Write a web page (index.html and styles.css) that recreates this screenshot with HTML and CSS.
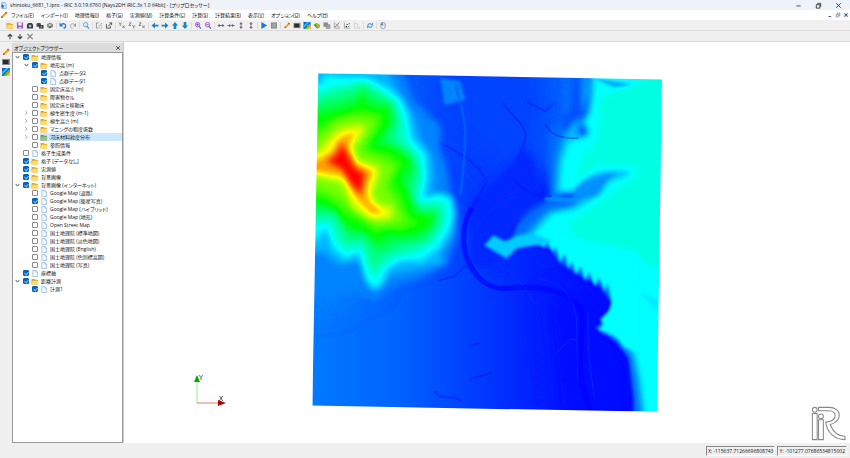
FILE: index.html
```
<!DOCTYPE html>
<html lang="ja">
<head>
  <meta charset="UTF-8">
  <meta name="viewport" content="width=device-width, initial-scale=1.0">
  <title>shintoku_6681_1.ipro - iRIC</title>
  <link rel="stylesheet" href="styles.css">
</head>
<body>
  <!-- Icon set -->
  <svg class="defs" width="0" height="0" aria-hidden="true">
    <symbol id="pencil" viewBox="0 0 16 16"><path d="M2 14l1-4 8-8 3 3-8 8z" fill="#f5a21b"/><path d="M2 14l1-4 3 3z" fill="#7a4a12"/><path d="M10 3l3 3 2-2-3-3z" fill="#d9472b"/></symbol>
    <symbol id="folder" viewBox="0 0 16 16"><path d="M0 2h7l2 2h6v11H0z" fill="#e3a920"/><path d="M2 6h13v8H1z" fill="#ffdc6e"/></symbol>
    <symbol id="folder-green" viewBox="0 0 16 16"><path d="M0 2h7l2 2h6v11H0z" fill="#6f9a5a"/><path d="M2 6h13v8H1z" fill="#9cc08a"/></symbol>
    <symbol id="page" viewBox="0 0 16 16"><path d="M3 1h7l4 4v10H3z" fill="#f4f9ff" stroke="#7fa9d8" stroke-width="1.5"/><path d="M10 1v4h4" fill="#b9d4f2" stroke="#7fa9d8"/></symbol>
    <symbol id="app" viewBox="0 0 16 16"><path d="M4 1h7l3 4v10H4z" fill="#d5e6f7" stroke="#6f9ccc" stroke-width="1.5"/><path d="M2 9l4-4 4 4-4 6z" fill="#2f7bd6"/></symbol>
    <symbol id="save" viewBox="0 0 16 16"><path d="M1 1h14v14H1z" fill="#9a5bb0"/><path d="M4 1h8v7H4z" fill="#f3e9f7"/><path d="M5 11h6v4H5z" fill="#e4d0ea"/></symbol>
    <symbol id="camera" viewBox="0 0 16 16"><path d="M1 6l3-4h8l3 4v9H1z" fill="#3b3f44"/><circle cx="8" cy="9" r="3" fill="#a8c4dc"/></symbol>
    <symbol id="cameras" viewBox="0 0 16 16"><path d="M0 4l2-2h6l2 2v7H0z" fill="#4b4f55"/><path d="M6 7h10v8H6z" fill="#2f3338"/><circle cx="11" cy="11" r="2" fill="#9dbbd6"/></symbol>
    <symbol id="globe" viewBox="0 0 16 16"><path d="M8 1l7 4v6l-7 4-7-4V5z" fill="#8b8b8b"/><circle cx="8" cy="7" r="3" fill="#c9c9c9"/><path d="M5 12l5-3 2 2-5 3z" fill="#555"/></symbol>
    <symbol id="undo" viewBox="0 0 16 16"><path d="M4 6c5-4 10-1 10 3 0 3-2 5-5 5" fill="none" stroke="#2f7bd6" stroke-width="3"/><path d="M0 1v9h9z" fill="#2f7bd6"/></symbol>
    <symbol id="redo" viewBox="0 0 16 16"><path d="M12 6C7 2 2 5 2 9c0 3 2 5 5 5" fill="none" stroke="#9a9a9a" stroke-width="2"/><path d="M15 2v8H8z" fill="#9a9a9a"/></symbol>
    <symbol id="zoom" viewBox="0 0 16 16"><circle cx="7" cy="6" r="5" fill="#dcebfa" stroke="#6f9cd6" stroke-width="2"/><path d="M10 10l5 5" stroke="#5b8fd0" stroke-width="3"/></symbol>
    <symbol id="zoom-in" viewBox="0 0 16 16"><circle cx="7" cy="6" r="5" fill="#efe6fb" stroke="#7a62c8" stroke-width="2"/><path d="M10 10l5 5" stroke="#4f79c9" stroke-width="3"/><path d="M4 6h6M7 3v6" stroke="#b03ba8" stroke-width="2"/></symbol>
    <symbol id="zoom-out" viewBox="0 0 16 16"><circle cx="7" cy="6" r="5" fill="#efe6fb" stroke="#7a62c8" stroke-width="2"/><path d="M10 10l5 5" stroke="#4f79c9" stroke-width="3"/><path d="M4 6h6" stroke="#b03ba8" stroke-width="2"/></symbol>
    <symbol id="region" viewBox="0 0 16 16"><path d="M7 2H2v12h4M12 6l2-2-2-2" fill="none" stroke="#666" stroke-width="1.500"/><path d="M8 8h6v6H8z" fill="none" stroke="#999" stroke-width="1.500" stroke-dasharray="2 1"/></symbol>
    <symbol id="expand" viewBox="0 0 16 16"><path d="M2 5v9h9V9M6 10l8-8M9 2h5v5" fill="none" stroke="#444" stroke-width="2"/></symbol>
    <symbol id="axis-yx" viewBox="0 0 16 16"><path d="M1 1l3 4 3-4M4 5v4M9 8l5 6M14 8l-5 6" fill="none" stroke="#555" stroke-width="1.500"/></symbol>
    <symbol id="axis-zy" viewBox="0 0 16 16"><path d="M1 2h5L1 8h5M9 7l3 4 3-4M12 11v4" fill="none" stroke="#555" stroke-width="1.500"/></symbol>
    <symbol id="axis-zx" viewBox="0 0 16 16"><path d="M1 2h5L1 8h5M9 8l5 6M14 8l-5 6" fill="none" stroke="#555" stroke-width="1.500"/></symbol>
    <symbol id="left" viewBox="0 0 16 16"><path d="M0 8l8-7v5h8v4H8v5z" fill="#1789c0"/></symbol>
    <symbol id="right" viewBox="0 0 16 16"><path d="M16 8L8 1v5H0v4h8v5z" fill="#1789c0"/></symbol>
    <symbol id="up" viewBox="0 0 16 16"><path d="M8 0l7 8h-4v8H5V8H1z" fill="#1789c0"/></symbol>
    <symbol id="down" viewBox="0 0 16 16"><path d="M8 16l7-8h-4V0H5v8H1z" fill="#1789c0"/></symbol>
    <symbol id="wide" viewBox="0 0 16 16"><path d="M0 8l5-4v3h6V4l5 4-5 4V9H5v3z" fill="#666"/></symbol>
    <symbol id="narrow" viewBox="0 0 16 16"><path d="M0 7h4V4l4 4-4 4V9H0zM16 7h-4V4L8 8l4 4V9h4z" fill="#666"/></symbol>
    <symbol id="tall" viewBox="0 0 16 16"><path d="M8 0l4 5H9v6h3l-4 5-4-5h3V5H4z" fill="#666"/></symbol>
    <symbol id="short" viewBox="0 0 16 16"><path d="M7 0v3H4l4 5 4-5H9V0zM7 16v-3H4l4-5 4 5H9v3z" fill="#666"/></symbol>
    <symbol id="play" viewBox="0 0 16 16"><path d="M2 0l13 8-13 8z" fill="#1f77d2"/></symbol>
    <symbol id="stop" viewBox="0 0 16 16"><path d="M1 1h14v14H1z" fill="#8f8f8f"/><path d="M4 4h8v8H4z" fill="#a3a3a3"/></symbol>
    <symbol id="console" viewBox="0 0 16 16"><path d="M0 2h16v12H0z" fill="#8a8a8a"/><path d="M2 4h11v8H2z" fill="#2a2a2a"/></symbol>
    <symbol id="rainbow" viewBox="0 0 16 16"><path d="M0 0h16v16H0z" fill="#1455e8"/><path d="M0 8l8-8h6L0 14z" fill="#19c8e8"/><path d="M2 16L16 2v6l-8 8z" fill="#4bd12a"/><path d="M8 16l8-8v8z" fill="#f8d21c"/><circle cx="11" cy="10" r="3" fill="#f08a1c"/></symbol>
    <symbol id="surface" viewBox="0 0 16 16"><path d="M0 7l6-5 9 5-7 6z" fill="#23b04a"/><path d="M4 4l5-2 3 3-4 2z" fill="#f5b81c"/><path d="M3 10l6 2 5-4v4l-5 3z" fill="#2a62cf"/><circle cx="10" cy="10" r="3" fill="#f2a31d"/></symbol>
    <symbol id="grid-view" viewBox="0 0 16 16"><path d="M0 1h10v10H0z" fill="#8c8c8c"/><path d="M6 6h9v9H6z" fill="#b5b5b5" stroke="#777"/><path d="M6 10h9M10 6v9" stroke="#777"/></symbol>
    <symbol id="graph" viewBox="0 0 16 16"><path d="M2 1v13h13" fill="none" stroke="#888" stroke-width="1.500"/><path d="M3 11l4-2 6-8" fill="none" stroke="#c03fb0" stroke-width="2"/><path d="M5 3l3 6 6 2" fill="none" stroke="#8b8b8b" stroke-width="1.500"/></symbol>
    <symbol id="scatter" viewBox="0 0 16 16"><path d="M2 1v13h13" fill="none" stroke="#888" stroke-width="1.500"/><path d="M5 9h3v3H5zM7 5h3v2H7zM12 3h2v2h-2zM11 9h2v2h-2z" fill="#222"/></symbol>
    <symbol id="graph-off" viewBox="0 0 16 16"><path d="M2 1v13h13" fill="none" stroke="#c4c4c4" stroke-width="1.500"/><path d="M4 4c5-2 7 2 4 5l6 4" fill="none" stroke="#bbb" stroke-width="1.500"/></symbol>
    <symbol id="sync" viewBox="0 0 16 16"><path d="M3 10c-1-5 4-8 8-5M13 6c1 5-4 8-8 5" fill="none" stroke="#5c9ad8" stroke-width="2.500"/><path d="M9 7h6V1zM7 9H1v6z" fill="#5c9ad8"/></symbol>
    <symbol id="mouse" viewBox="0 0 16 16"><rect x="3" y="1" width="10" height="14" rx="4" fill="#e9edf5" stroke="#7b8190" stroke-width="1.500"/><path d="M8 1v6H3V5q0-4 5-4z" fill="#5f8fd8"/><path d="M3 7h10" stroke="#7b8190"/></symbol>
    <symbol id="arrow-up" viewBox="0 0 16 16"><path d="M8 14V3M3 8l5-5 5 5" fill="none" stroke="#444" stroke-width="2.500"/></symbol>
    <symbol id="arrow-down" viewBox="0 0 16 16"><path d="M8 2v11M3 8l5 5 5-5" fill="none" stroke="#444" stroke-width="2.500"/></symbol>
    <symbol id="delete" viewBox="0 0 16 16"><path d="M2 2l12 12M14 2L2 14" stroke="#777" stroke-width="2.500"/></symbol>
    <symbol id="close" viewBox="0 0 16 16"><path d="M3 3l10 10M13 3L3 13" stroke="#333" stroke-width="2.200"/></symbol>
    <symbol id="minimize" viewBox="0 0 16 16"><path d="M3 9h10" stroke="#444" stroke-width="2"/></symbol>
    <symbol id="restore" viewBox="0 0 16 16"><path d="M3 6h8v8H3z" fill="none" stroke="#333" stroke-width="2"/><path d="M5 3h8v8" fill="none" stroke="#333" stroke-width="2"/></symbol>
    <symbol id="mdi-min" viewBox="0 0 16 16"><path d="M4 12h7" stroke="#4d6685" stroke-width="3"/></symbol>
    <symbol id="mdi-restore" viewBox="0 0 16 16"><path d="M3 7h7v6H3zM6 6V3h7v6h-3" fill="none" stroke="#6d829d" stroke-width="2"/></symbol>
    <symbol id="mdi-close" viewBox="0 0 16 16"><path d="M2 2h12v12H2z" fill="#c9d3df"/><path d="M4 4l8 8M12 4l-8 8" stroke="#4d6685" stroke-width="2.500"/></symbol>
    <symbol id="chevron-open" viewBox="0 0 16 16"><path d="M3 5l5 6 5-6" fill="none" stroke="#333" stroke-width="2.200"/></symbol>
    <symbol id="chevron" viewBox="0 0 16 16"><path d="M5 3l5 5-5 5" fill="none" stroke="#888" stroke-width="2"/></symbol>
  </svg>

  <header class="titlebar">
    <svg class="icon"><use href="#app"/></svg>
    <h1>shintoku_6681_1.ipro - iRIC 3.0.19.6760 [Nays2DH iRIC.3x 1.0 64bit] - [プリプロセッサー]</h1>
    <div class="window-buttons">
      <button aria-label="最小化"><svg class="icon"><use href="#minimize"/></svg></button>
      <button aria-label="元に戻す"><svg class="icon"><use href="#restore"/></svg></button>
      <button aria-label="閉じる"><svg class="icon"><use href="#close"/></svg></button>
    </div>
  </header>

  <nav class="menubar">
    <svg class="icon"><use href="#pencil"/></svg>
    <button>ファイル(<u>F</u>)</button>
    <button>インポート(<u>I</u>)</button>
    <button>地理情報(<u>I</u>)</button>
    <button>格子(<u>G</u>)</button>
    <button>実測値(<u>M</u>)</button>
    <button>計算条件(<u>C</u>)</button>
    <button>計算(<u>S</u>)</button>
    <button>計算結果(<u>R</u>)</button>
    <button>表示(<u>V</u>)</button>
    <button>オプション(<u>O</u>)</button>
    <button>ヘルプ(<u>H</u>)</button>
    <div class="mdi-buttons">
      <button aria-label="最小化"><svg class="icon"><use href="#mdi-min"/></svg></button>
      <button aria-label="元に戻す"><svg class="icon"><use href="#mdi-restore"/></svg></button>
      <button aria-label="閉じる"><svg class="icon"><use href="#mdi-close"/></svg></button>
    </div>
  </nav>

  <div class="toolbar">
    <div class="tools">
      <button aria-label="開く"><svg class="icon"><use href="#folder"/></svg></button>
      <button aria-label="保存"><svg class="icon"><use href="#save"/></svg></button>
      <button aria-label="スナップショット"><svg class="icon"><use href="#camera"/></svg></button>
      <button aria-label="連続スナップショット"><svg class="icon"><use href="#cameras"/></svg></button>
      <button aria-label="Google Earth"><svg class="icon"><use href="#globe"/></svg></button>
    </div>
    <div class="tools">
      <button aria-label="元に戻す"><svg class="icon"><use href="#undo"/></svg></button>
      <button aria-label="やり直し"><svg class="icon"><use href="#redo"/></svg></button>
    </div>
    <div class="tools">
      <button aria-label="拡大鏡"><svg class="icon"><use href="#zoom"/></svg></button>
    </div>
    <div class="tools">
      <button aria-label="領域"><svg class="icon"><use href="#region"/></svg></button>
      <button aria-label="全体表示"><svg class="icon"><use href="#expand"/></svg></button>
    </div>
    <div class="tools">
      <button aria-label="XY平面"><svg class="icon"><use href="#axis-yx"/></svg></button>
      <button aria-label="YZ平面"><svg class="icon"><use href="#axis-zy"/></svg></button>
      <button aria-label="XZ平面"><svg class="icon"><use href="#axis-zx"/></svg></button>
    </div>
    <div class="tools">
      <button aria-label="左へ"><svg class="icon"><use href="#left"/></svg></button>
      <button aria-label="右へ"><svg class="icon"><use href="#right"/></svg></button>
      <button aria-label="上へ"><svg class="icon"><use href="#up"/></svg></button>
      <button aria-label="下へ"><svg class="icon"><use href="#down"/></svg></button>
    </div>
    <div class="tools">
      <button aria-label="拡大"><svg class="icon"><use href="#zoom-in"/></svg></button>
      <button aria-label="縮小"><svg class="icon"><use href="#zoom-out"/></svg></button>
    </div>
    <div class="tools">
      <button aria-label="X方向に拡大"><svg class="icon"><use href="#wide"/></svg></button>
      <button aria-label="X方向に縮小"><svg class="icon"><use href="#narrow"/></svg></button>
      <button aria-label="Y方向に拡大"><svg class="icon"><use href="#tall"/></svg></button>
      <button aria-label="Y方向に縮小"><svg class="icon"><use href="#short"/></svg></button>
    </div>
    <div class="tools">
      <button aria-label="計算開始"><svg class="icon"><use href="#play"/></svg></button>
      <button aria-label="計算停止"><svg class="icon"><use href="#stop"/></svg></button>
    </div>
    <div class="tools">
      <button aria-label="プリプロセッサー"><svg class="icon"><use href="#pencil"/></svg></button>
      <button aria-label="コンソール"><svg class="icon"><use href="#console"/></svg></button>
      <button aria-label="2次元可視化"><svg class="icon"><use href="#rainbow"/></svg></button>
      <button aria-label="鳥瞰図"><svg class="icon"><use href="#surface"/></svg></button>
      <button aria-label="3次元可視化"><svg class="icon"><use href="#grid-view"/></svg></button>
      <button aria-label="グラフ"><svg class="icon"><use href="#graph"/></svg></button>
      <button aria-label="散布図"><svg class="icon"><use href="#scatter"/></svg></button>
      <button aria-label="検証" disabled><svg class="icon"><use href="#graph-off"/></svg></button>
    </div>
    <div class="tools">
      <button aria-label="更新"><svg class="icon"><use href="#sync"/></svg></button>
    </div>
    <div class="tools">
      <button aria-label="マウス"><svg class="icon"><use href="#mouse"/></svg></button>
    </div>
  </div>

  <div class="toolbar">
    <div class="tools">
      <button aria-label="上に移動"><svg class="icon"><use href="#arrow-up"/></svg></button>
      <button aria-label="下に移動"><svg class="icon"><use href="#arrow-down"/></svg></button>
      <button aria-label="削除"><svg class="icon"><use href="#delete"/></svg></button>
    </div>
  </div>

  <main class="workspace">
    <div class="side-tools">
      <button aria-label="プリプロセッサー"><svg class="icon"><use href="#pencil"/></svg></button>
      <button aria-label="コンソール"><svg class="icon"><use href="#console"/></svg></button>
      <button aria-label="2次元可視化"><svg class="icon"><use href="#rainbow"/></svg></button>
    </div>

    <section class="browser">
      <div class="browser-header">
        <h2>オブジェクトブラウザー</h2>
        <button aria-label="閉じる"><svg class="icon"><use href="#close"/></svg></button>
      </div>
      <ul class="tree">
        <li><svg class="arrow"><use href="#chevron-open"/></svg><input type="checkbox" id="n1" checked><label for="n1"><svg class="icon"><use href="#folder"/></svg>地理情報</label></li>
        <li class="level-2"><svg class="arrow"><use href="#chevron-open"/></svg><input type="checkbox" id="n2" checked><label for="n2"><svg class="icon"><use href="#folder"/></svg>地形高 (m)</label></li>
        <li class="level-3"><span class="arrow"></span><input type="checkbox" id="n3" checked><label for="n3"><svg class="icon"><use href="#page"/></svg>点群データ2</label></li>
        <li class="level-3"><span class="arrow"></span><input type="checkbox" id="n4" checked><label for="n4"><svg class="icon"><use href="#page"/></svg>点群データ1</label></li>
        <li class="level-2"><span class="arrow"></span><input type="checkbox" id="n5"><label for="n5"><svg class="icon"><use href="#folder"/></svg>固定床高さ (m)</label></li>
        <li class="level-2"><span class="arrow"></span><input type="checkbox" id="n6"><label for="n6"><svg class="icon"><use href="#folder"/></svg>障害物セル</label></li>
        <li class="level-2"><span class="arrow"></span><input type="checkbox" id="n7"><label for="n7"><svg class="icon"><use href="#folder"/></svg>固定床と移動床</label></li>
        <li class="level-2"><svg class="arrow"><use href="#chevron"/></svg><input type="checkbox" id="n8"><label for="n8"><svg class="icon"><use href="#folder"/></svg>植生密生度 (m-1)</label></li>
        <li class="level-2"><svg class="arrow"><use href="#chevron"/></svg><input type="checkbox" id="n9"><label for="n9"><svg class="icon"><use href="#folder"/></svg>植生高さ (m)</label></li>
        <li class="level-2"><svg class="arrow"><use href="#chevron"/></svg><input type="checkbox" id="n10"><label for="n10"><svg class="icon"><use href="#folder"/></svg>マニングの粗度係数</label></li>
        <li class="level-2 selected"><svg class="arrow"><use href="#chevron"/></svg><input type="checkbox" id="n11"><label for="n11"><svg class="icon"><use href="#folder-green"/></svg>河床材料粒度分布</label></li>
        <li class="level-2"><span class="arrow"></span><input type="checkbox" id="n12"><label for="n12"><svg class="icon"><use href="#folder"/></svg>参照情報</label></li>
        <li><span class="arrow"></span><input type="checkbox" id="n13"><label for="n13"><svg class="icon"><use href="#page"/></svg>格子生成条件</label></li>
        <li><span class="arrow"></span><input type="checkbox" id="n14" checked><label for="n14"><svg class="icon"><use href="#folder"/></svg>格子 [データなし]</label></li>
        <li><span class="arrow"></span><input type="checkbox" id="n15" checked><label for="n15"><svg class="icon"><use href="#folder"/></svg>実測値</label></li>
        <li><span class="arrow"></span><input type="checkbox" id="n16" checked><label for="n16"><svg class="icon"><use href="#folder"/></svg>背景画像</label></li>
        <li><svg class="arrow"><use href="#chevron-open"/></svg><input type="checkbox" id="n17" checked><label for="n17"><svg class="icon"><use href="#folder"/></svg>背景画像 (インターネット)</label></li>
        <li class="level-2"><span class="arrow"></span><input type="checkbox" id="n18"><label for="n18"><svg class="icon"><use href="#page"/></svg>Google Map (道路)</label></li>
        <li class="level-2"><span class="arrow"></span><input type="checkbox" id="n19" checked><label for="n19"><svg class="icon"><use href="#page"/></svg>Google Map (衛星写真)</label></li>
        <li class="level-2"><span class="arrow"></span><input type="checkbox" id="n20"><label for="n20"><svg class="icon"><use href="#page"/></svg>Google Map (ハイブリッド)</label></li>
        <li class="level-2"><span class="arrow"></span><input type="checkbox" id="n21"><label for="n21"><svg class="icon"><use href="#page"/></svg>Google Map (地形)</label></li>
        <li class="level-2"><span class="arrow"></span><input type="checkbox" id="n22"><label for="n22"><svg class="icon"><use href="#page"/></svg>Open Street Map</label></li>
        <li class="level-2"><span class="arrow"></span><input type="checkbox" id="n23"><label for="n23"><svg class="icon"><use href="#page"/></svg>国土地理院 (標準地図)</label></li>
        <li class="level-2"><span class="arrow"></span><input type="checkbox" id="n24"><label for="n24"><svg class="icon"><use href="#page"/></svg>国土地理院 (淡色地図)</label></li>
        <li class="level-2"><span class="arrow"></span><input type="checkbox" id="n25"><label for="n25"><svg class="icon"><use href="#page"/></svg>国土地理院 (English)</label></li>
        <li class="level-2"><span class="arrow"></span><input type="checkbox" id="n26"><label for="n26"><svg class="icon"><use href="#page"/></svg>国土地理院 (色別標高図)</label></li>
        <li class="level-2"><span class="arrow"></span><input type="checkbox" id="n27"><label for="n27"><svg class="icon"><use href="#page"/></svg>国土地理院 (写真)</label></li>
        <li><span class="arrow"></span><input type="checkbox" id="n28" checked><label for="n28"><svg class="icon"><use href="#page"/></svg>座標軸</label></li>
        <li><svg class="arrow"><use href="#chevron-open"/></svg><input type="checkbox" id="n29" checked><label for="n29"><svg class="icon"><use href="#folder"/></svg>距離計測</label></li>
        <li class="level-2"><span class="arrow"></span><input type="checkbox" id="n30" checked><label for="n30"><svg class="icon"><use href="#page"/></svg>計測1</label></li>
      </ul>
    </section>

    <section class="view">
      <!-- Terrain: heights are drawn as greys, then the ramp filter turns them into colours -->
      <svg class="terrain" viewBox="-543 -66 2178 1200" role="img" aria-label="地形高">
        <defs>
          <clipPath id="extent"><path d="M40 26L1071 45 1056 1042 22 1023z"/></clipPath>
          <filter id="ramp" color-interpolation-filters="sRGB" filterUnits="userSpaceOnUse" x="0" y="0" width="1100" height="1070">
            <feComponentTransfer>
              <feFuncR type="table" tableValues="0 0 0 1 1"/>
              <feFuncG type="table" tableValues="0 1 1 1 0"/>
              <feFuncB type="table" tableValues="1 1 0 0 0"/>
            </feComponentTransfer>
          </filter>
          <filter id="soft" color-interpolation-filters="sRGB" x="-20%" y="-20%" width="140%" height="140%"><feGaussianBlur stdDeviation="10"/></filter>
          <filter id="wide-soft" color-interpolation-filters="sRGB" x="-30%" y="-30%" width="160%" height="160%"><feGaussianBlur stdDeviation="36"/></filter>
          <filter id="fine" color-interpolation-filters="sRGB" x="-20%" y="-20%" width="140%" height="140%"><feGaussianBlur stdDeviation="5"/></filter>
          <filter id="line" color-interpolation-filters="sRGB" filterUnits="userSpaceOnUse" x="0" y="0" width="1100" height="1070"><feGaussianBlur stdDeviation="2"/></filter>
          <linearGradient id="plain" x1="0" x2="1">
            <stop offset="0" stop-color="#1f1f1f"/>
            <stop offset=".25" stop-color="#191919"/>
            <stop offset=".42" stop-color="#111"/>
            <stop offset=".6" stop-color="#090909"/>
            <stop offset=".8" stop-color="#040404"/>
            <stop offset="1" stop-color="#020202"/>
          </linearGradient>
        </defs>
        <g clip-path="url(#extent)">
          <g filter="url(#ramp)">
            <rect width="1100" height="1070" fill="url(#plain)"/>
            <g filter="url(#wide-soft)">
              <path class="h06" d="M380-60H900L740 330 600 400 540 300 420 200z"/>
              <path class="h09" d="M700-60H900L800 240 700 330 740 120z"/>
              <path class="h13" d="M-60 500H160L220 660 60 740-60 720z"/>
              <path class="h01" d="M740 690L880 700 980 900 980 1100H780L760 900z"/>
            </g>
            <g filter="url(#soft)">
              <path class="h03" d="M490 420L560 360 660 250 690 290 700 400 640 480 560 560 600 620 500 600z"/>
              <path class="h13" d="M-60-60H250L330 110 408 185 405 260 425 300 435 380 455 430 455 520 425 600 350 640 260 670 210 710 150 680-60 720z"/>
              <path class="h18" d="M-60-60H200L290 95 330 160 345 220 380 270 388 340 380 400 440 390 452 450 445 510 405 575 425 595 340 615 260 630 210 680 180 640 160 590 100 600 50 560-60 600z"/>
              <path class="h12" d="M780-60L800 130 735 200 725 290 735 400 670 440 640 480 680 520 760 545z"/>
            </g>
            <g filter="url(#fine)">
              <path class="h12" d="M760 400L640 480 620 520 650 535 735 550 760 590 820 630 880 660 925 720 900 770 870 790 930 830 970 880 985 1000 985 1100H1200V400z"/>
              <path class="h13" d="M405 40L465 50 482 105 450 115 418 122z"/>
            </g>
            <g filter="url(#soft)">
              <path class="h25" d="M-60 45L45 60 60 30 110 35 190 40 240 65 288 105 308 150 318 218 362 268 366 335 352 408 395 385 438 400 445 450 434 495 402 550 350 590 290 585 245 615 230 660 205 672 185 650 175 605 160 560 125 585 85 555 62 490 35 530-60 540z"/>
              <path class="h31" d="M-60 95L60 75 110 60 190 55 235 85 278 115 297 165 305 225 345 280 355 335 340 406 380 410 420 412 425 460 410 500 380 540 320 572 260 585 225 615 205 645 185 610 170 550 125 560 95 530 70 470-60 500z"/>
              <path class="h37" d="M-60 150L60 95 150 70 165 50 205 75 262 110 280 170 270 222 325 270 342 325 322 400 345 432 400 425 405 475 370 530 280 555 230 575 208 615 185 550 165 525 125 535 85 455-60 470z"/>
              <path class="h44" d="M-60 155L70 120 155 95 168 70 195 100 258 120 268 170 240 230 300 260 332 305 305 365 330 415 345 440 395 440 390 480 345 525 270 530 220 560 180 510 140 510 90 440-60 420z"/>
              <path class="h50" d="M-60 170L80 145 155 125 172 90 190 130 250 132 252 180 205 240 265 250 320 292 285 335 312 390 325 445 385 458 365 492 300 512 245 505 220 535 180 500 125 490 90 430-60 385z"/>
              <path class="h56" d="M-60 200L55 185 85 158 155 140 180 135 232 152 225 190 185 250 250 268 292 298 260 350 290 400 310 455 340 475 290 498 235 495 210 505 170 475 110 445 60 400-60 378z"/>
              <path class="h62" d="M-60 230L30 225 90 170 150 155 212 168 190 215 165 260 240 288 268 310 240 370 275 415 295 472 220 485 160 450 100 400 30 365-60 360z"/>
            </g>
            <g filter="url(#soft)">
              <path class="h72" d="M-60 270L40 262 70 222 110 190 172 182 180 198 145 245 155 287 222 307 218 345 200 385 218 420 262 427 258 462 200 466 145 430 110 355 30 333-60 335z"/>
              <path class="h84" d="M-60 298L30 290 80 260 102 220 152 202 130 245 152 295 205 320 186 362 190 410 238 446 200 448 157 405 120 335 30 322-60 320z"/>
            </g>
            <g filter="url(#soft)">
              <path class="h100" d="M65 292L95 270 110 235 128 270 150 312 180 328 170 370 166 392 135 355 110 312z"/>
            </g>
            <g filter="url(#soft)">
              <path class="h18" d="M840-60L850 80 835 140 800 180 770 215 755 290 748 390 810 390 850 355 900 328 980 328 900 350 870 385 810 425 730 440 690 480 660 515 720 530 800 560z"/>
              <path class="h25" d="M860-60L858 80 850 140 830 175 850 205 790 235 768 290 762 380 805 382 850 345 900 325 980 325 905 350 878 388 810 430 740 445 705 485 675 520 740 525 800 580 900 640 940 700 905 775 940 810 985 870 1000 940 1020 1100H1200V-60z"/>
              <path class="h28" d="M885 95L880 220 830 280 810 350 880 300 1010 315 900 400 780 480 820 530 1000 580 1200 700V-60L990 60z"/>
            </g>
            <g filter="url(#fine)">
              <path class="h25" d="M700 500L668 522 690 540 700 528 715 550 727 532 745 565 752 542 765 592 780 568 790 612 802 590 812 630 828 605 840 650 852 622 870 667 882 638 900 680 908 652 920 715 912 740 885 765 895 780 880 795 905 805 935 820 960 850 1000 860V560z"/>
              <path class="h20" d="M538 542L565 512 600 530 640 512 680 505 745 532 700 540 635 552 605 582z"/>
              <path class="h14" d="M720 395L800 400 850 365 880 340 930 325 900 350 865 385 800 415 720 408z"/>
              <path class="h16" d="M860 40L930 68 985 60 930 52z"/>
              <path class="h22" d="M1000 680L1060 710 1060 740z"/>
            </g>
            <g class="streams" filter="url(#line)">
              <path class="river" d="M500 430C470 480 472 540 485 580 510 640 545 672 600 672 660 666 700 665 750 680 800 695 833 720 833 770 828 830 820 900 832 960L855 1040"/>
              <path class="stream" d="M403 235L440 252 490 285 525 318 545 350 515 405 497 440M400 648L450 635 478 606 492 606M595 115C620 160 655 170 662 210 660 250 640 270 635 290M665 112L720 140 748 115M722 180C735 210 770 225 820 220M630 350C660 380 700 400 740 395M490 845l32-8M480 1065l55-15M492 945L560 925M390 980C395 1010 440 985 470 1010M752 860L765 900C765 940 790 970 800 985M700 1015C740 995 790 990 830 985"/>
              <path class="light" d="M452 60L462 100C480 150 482 200 480 250 474 300 475 350 465 390"/>
              <path class="faint" d="M500 110L492 300 500 420M510 490C530 450 580 420 640 390M560 590C620 620 660 660 690 720M700 640C790 660 815 720 815 780L818 940M850 740C845 840 855 900 868 1000M750 870L795 825H815"/>
            </g>
          </g>
        </g>
      </svg>

      <svg class="axes" viewBox="0 0 36 36" role="img" aria-label="座標軸">
        <path d="M5 30V8" stroke="#8af08a"/>
        <path d="M5 30h22" stroke="#f07070"/>
        <path d="M5 2l3 7H2z" fill="#00a800"/>
        <path d="M34 30l-8-3v6z" fill="#b00000"/>
        <text x="7" y="7">Y</text>
        <text x="27" y="28">X</text>
      </svg>

      <svg class="logo" viewBox="0 0 102 102" role="img" aria-label="iRIC">
        <path d="M22 4H52C92 4 92 46 56 54 64 76 78 88 99 88V98C68 98 46 76 43 47 78 44 78 14 52 14H22z"/>
        <circle cx="11" cy="11" r="7"/>
        <path d="M4 22h14v76H4z"/>
        <circle cx="29" cy="30" r="7"/>
        <path d="M22 40h14v58H22z"/>
      </svg>
    </section>
  </main>

  <footer class="statusbar">
    <output>X: -115637.71266696808743</output>
    <output>Y: -101277.07686534815002</output>
  </footer>
</body>
</html>
```
FILE: styles.css
```
* {
  box-sizing: border-box;
}

body {
  display: flex;
  flex-direction: column;
  height: 100vh;
  margin: 0;
  overflow: hidden;
  background-color: #f0f0f0;
  color: #111;
  font-family: "Open Sans", "Noto Sans CJK JP", sans-serif;
  font-size: 5px;
  font-feature-settings: "palt";
  line-height: 8px;
}

h1, h2 {
  margin: 0;
  font-size: inherit;
  font-weight: normal;
}

button {
  display: flex;
  align-items: center;
  padding: 0;
  border: none;
  background: none;
  color: inherit;
  font: inherit;
  font-feature-settings: inherit;
}

.defs {
  position: absolute;
}

.icon {
  display: block;
  flex: none;
  width: 8px;
  height: 8px;
}

/* Title and menus */
.titlebar {
  display: flex;
  align-items: center;
  gap: 3px;
  height: 10px;
  padding-right: 8px;
  background-color: #eef3fa;
}

.titlebar h1 {
  flex: 1;
}

.titlebar .icon {
  width: 7px;
  height: 7px;
}

.window-buttons {
  display: flex;
  gap: 13px;
}

.menubar {
  display: flex;
  align-items: center;
  gap: 7px;
  height: 10px;
  padding-right: 1px;
  background-color: #fff;
}

.menubar > .icon {
  margin-right: -4px;
}

.menubar button {
  white-space: nowrap;
}

.menubar u {
  text-underline-offset: 0;
  text-decoration-thickness: 1px;
  text-decoration-color: #999;
}

.mdi-buttons {
  display: flex;
  gap: 2px;
  margin-left: auto;
}

.mdi-buttons .icon {
  width: 6px;
  height: 6px;
}

/* Toolbars */
.toolbar {
  display: flex;
  align-items: center;
  height: 11px;
  padding-left: 4px;
  border-bottom: 1px solid #d9d9d9;
}

.tools {
  display: flex;
  gap: 2px;
  padding: 0 2px;
  border-right: 1px solid #dcdcdc;
}

.tools:last-child {
  border-right: none;
}

.tools .icon {
  width: 8px;
  height: 7px;
}

.workspace {
  display: flex;
  flex: 1;
  min-height: 0;
}

.side-tools {
  display: flex;
  flex-direction: column;
  gap: 2px;
  width: 12px;
  padding: 6px 2px;
}

/* Object browser */
.browser {
  display: flex;
  flex-direction: column;
  width: 111px;
  padding-top: 1px;
}

.browser-header {
  display: flex;
  justify-content: space-between;
  align-items: center;
  height: 9px;
  padding: 0 2px;
  background-color: #dcdcdc;
}

.browser-header .icon {
  width: 6px;
  height: 6px;
}

.tree {
  flex: 1;
  margin: 0;
  padding: 0 0 0 1px;
  border: 1px solid #999;
  background-color: #fff;
  list-style: none;
}

.tree li {
  display: flex;
  align-items: center;
  gap: 2px;
  height: 8px;
}

.tree .level-2 {
  padding-left: 9px;
}

.tree .level-3 {
  padding-left: 18px;
}

.arrow {
  width: 7px;
  height: 6px;
}

.tree input {
  appearance: none;
  display: flex;
  justify-content: center;
  width: 6px;
  height: 6px;
  margin: 0;
  border: 1px solid #8a8a8a;
  border-radius: 1px;
  background-color: #fff;
}

.tree input:checked {
  border-color: #0067c0;
  background-color: #0067c0;
}

.tree input:checked::after {
  content: "";
  width: 2px;
  height: 3px;
  border: solid #8abbe6;
  border-width: 0 1px 1px 0;
  transform: rotate(40deg);
}

.tree label {
  display: flex;
  flex: 1;
  align-items: center;
  gap: 2px;
  white-space: nowrap;
}

.tree .icon {
  width: 8px;
  height: 7px;
}

.selected label {
  background-color: #cce8ff;
}

/* Map view */
.view {
  position: relative;
  flex: 1;
  min-width: 0;
  border-left: 1px solid #ccc;
  background-color: #fff;
}

.terrain {
  display: block;
  width: 100%;
  height: 100%;
}

.h01 { fill: #030303; }
.h03 { fill: #0a0a0a; }
.h06 { fill: #111; }
.h09 { fill: #191919; }
.h12 { fill: #1c1c1c; }
.h13 { fill: #212121; }
.h14 { fill: #242424; }
.h16 { fill: #2a2a2a; }
.h18 { fill: #2e2e2e; }
.h20 { fill: #333; }
.h22 { fill: #3a3a3a; }
.h25 { fill: #404040; }
.h28 { fill: #474747; }
.h31 { fill: #505050; }
.h37 { fill: #606060; }
.h44 { fill: #707070; }
.h50 { fill: #808080; }
.h56 { fill: #8f8f8f; }
.h62 { fill: #9e9e9e; }
.h72 { fill: #bababa; }
.h84 { fill: #d8d8d8; }
.h100 { fill: #fff; }

.streams path {
  fill: none;
  stroke-width: 4px;
}

.streams .river {
  stroke: #020202;
  stroke-opacity: 0.7;
  stroke-width: 15px;
}

.streams .stream {
  stroke: #060606;
  stroke-opacity: 0.5;
  stroke-width: 5px;
}

.streams .light {
  stroke: #1a1a1a;
  stroke-opacity: 0.7;
  stroke-width: 8px;
}

.streams .faint {
  stroke: #101010;
  stroke-opacity: 0.6;
  stroke-width: 3px;
}

.axes {
  position: absolute;
  left: 68px;
  bottom: 34px;
  width: 36px;
  height: 36px;
  font-size: 7px;
}

.logo {
  position: absolute;
  right: 4px;
  bottom: 2px;
  width: 35px;
  height: 35px;
  fill: #fff;
  stroke: #888;
  stroke-width: 3px;
}

/* Coordinates */
.statusbar {
  display: flex;
  justify-content: flex-end;
  align-items: center;
  gap: 2px;
  height: 15px;
  padding-right: 3px;
}

.statusbar output {
  padding: 0 1px;
  border: 1px solid;
  border-color: #888 #fff #fff #888;
}
```
